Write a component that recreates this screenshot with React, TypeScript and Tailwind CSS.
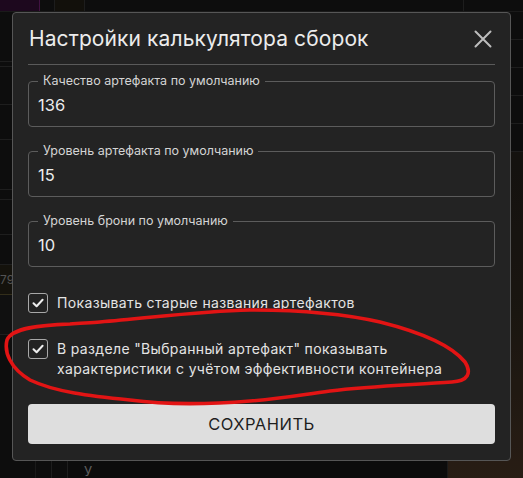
import React from 'react';

const font = { fontFamily: 'Inter, "Noto Sans", sans-serif' };

const rightRows = ['ен', 'ву', 'ро', 'но', '-и'];

const Field: React.FC<{ label: string; value: string; className?: string }> = ({ label, value, className }) => (
  <fieldset className={`h-[54px] rounded-[4px] border border-[#5c5c5c] px-[9px] ${className ?? ''}`}>
    <legend className="px-[5px] text-[12.5px] leading-[16px] text-[#d4d4d4]">{label}</legend>
    <div className="mt-[5px] text-[16.5px] leading-[22px] text-[#ececec]">{value}</div>
  </fieldset>
);

const Check: React.FC = () => (
  <span className="flex h-[20px] w-[20px] shrink-0 items-center justify-center rounded-[3px] border border-[#a8a8a8]">
    <svg width="14" height="14" viewBox="0 0 14 14" fill="none">
      <path d="M2.5 7.2 5.6 10.2 11.6 3.8" stroke="#eeeeee" strokeWidth="2" strokeLinecap="round" strokeLinejoin="round" />
    </svg>
  </span>
);

const Background: React.FC = () => (
  <div className="flex h-[478px] w-[523px] flex-col bg-[#141414]">
    <div className="flex h-[12px] border-b border-[#262626]">
      <div className="w-[40px] border-r border-[#5d1a5f] bg-[#2a0c2c]" />
      <div className="w-[15px] border-r border-[#2a2a2a]" />
      <div className="w-[30px] border-r border-[#2a2a2a] bg-[#1b1710]" />
      <div className="flex-1" />
      <div className="w-[60px] border-l border-[#2a2a2a]" />
    </div>
    <div className="flex flex-1">
      <div className="flex w-[36px] flex-col border-r border-[#262626]">
        <div className="h-[50px] border-b border-[#2c2c2c]" />
        <div className="h-[5px] border-b border-[#2c2c2c]" />
        <div className="h-[38px] border-b border-[#2c2c2c]" />
        <div className="h-[35px] border-b border-[#2c2c2c]" />
        <div className="h-[50px] border-b border-[#2c2c2c]" />
        <div className="h-[10px] border-b border-[#2c2c2c]" />
        <div className="h-[35px] border-b border-[#2c2c2c]" />
        <div className="h-[30px] border-b border-[#2c2c2c]" />
        <div className="h-[30px] border-b border-[#4a4326] bg-[#1d1b12] text-[12px] leading-[30px] text-[#777]">79</div>
        <div className="h-[40px] border-b border-[#2c2c2c] bg-[#181818]" />
        <div className="flex-1" />
      </div>
      <div className="flex flex-1 flex-col">
        <div className="flex-1" />
        <div className="flex h-[18px] border-t border-[#262626]">
          <div className="w-[16px] border-r border-[#2c2c2c]" />
          <div className="w-[16px] border-r border-[#2c2c2c]" />
          <div className="flex-1 bg-[#121212] pl-[16px] pt-[2px] text-[13px] leading-[16px] text-[#888]">У</div>
        </div>
      </div>
      <div className="flex w-[76px] flex-col border-l border-[#262626]">
        {rightRows.map((t) => (
          <div key={t} className="h-[28px] border-b border-[#2a2a2a] pl-[34px] text-[14px] leading-[28px] text-[#8c95a8]">
            {t}
          </div>
        ))}
        <div className="flex-1 bg-gradient-to-b from-[#1d1a16] via-[#262018] to-[#3a2a1e]" />
      </div>
    </div>
  </div>
);

export default function App() {
  return (
    <div className="relative h-[478px] w-[523px] overflow-hidden" style={font}>
      <Background />
      <div className="absolute inset-0 bg-black/30" />

      <div className="absolute left-[12px] top-[12px] flex w-[499px] flex-col rounded-[4px] border border-[#565656] bg-[#232323] px-[15px] pb-[16px]">
        <div className="flex h-[52px] items-center justify-between border-b border-[#5a5a5a]">
          <h2 className="pl-[1px] text-[21px] font-normal leading-[28px] tracking-[0.1px] text-[#ececec]">Настройки калькулятора сборок</h2>
          <svg width="18" height="18" viewBox="0 0 18 18" className="mr-[3px]" fill="none">
            <path d="M1.5 1.5 16.5 16.5 M16.5 1.5 1.5 16.5" stroke="#bdbdbd" strokeWidth="2" strokeLinecap="round" />
          </svg>
        </div>

        <Field className="mt-[8px]" label="Качество артефакта по умолчанию" value="136" />
        <Field className="mt-[16px]" label="Уровень артефакта по умолчанию" value="15" />
        <Field className="mt-[16px]" label="Уровень брони по умолчанию" value="10" />

        <label className="mt-[26px] flex items-center gap-[9px] text-[14px] leading-[20px] tracking-[0.35px] text-[#e4e4e4]">
          <Check />
          <span>Показывать старые названия артефактов</span>
        </label>

        <label className="mt-[26px] flex items-start gap-[9px] text-[14px] leading-[20px] tracking-[0.35px] text-[#e4e4e4]">
          <Check />
          <span>
            В разделе "Выбранный артефакт" показывать
            <br />
            характеристики с учётом эффективности контейнера
          </span>
        </label>

        <button className="mt-[25px] h-[40px] rounded-[4px] bg-[#dedede] text-[16.5px] tracking-[0.5px] text-[#1e1e1e]">
          СОХРАНИТЬ
        </button>
      </div>

      <svg className="pointer-events-none absolute inset-0" width="523" height="478" viewBox="0 0 523 478" fill="none">
        <path
          d="M100 322 C 150 318, 200 311, 250 310 C 300 310, 340 313, 380 322 C 420 332, 452 346, 465 362 C 472 373, 468 381, 452 382 C 410 385, 370 386, 330 391 C 300 395, 280 399, 250 401 C 200 405, 160 404, 130 400 C 90 396, 55 392, 30 380 C 10 368, 4 352, 7 340 C 12 328, 40 325, 70 324 C 82 323, 92 323, 100 322"
          stroke="#e21414"
          strokeWidth="3.6"
          strokeLinecap="round"
          strokeLinejoin="round"
        />
      </svg>
    </div>
  );
}
